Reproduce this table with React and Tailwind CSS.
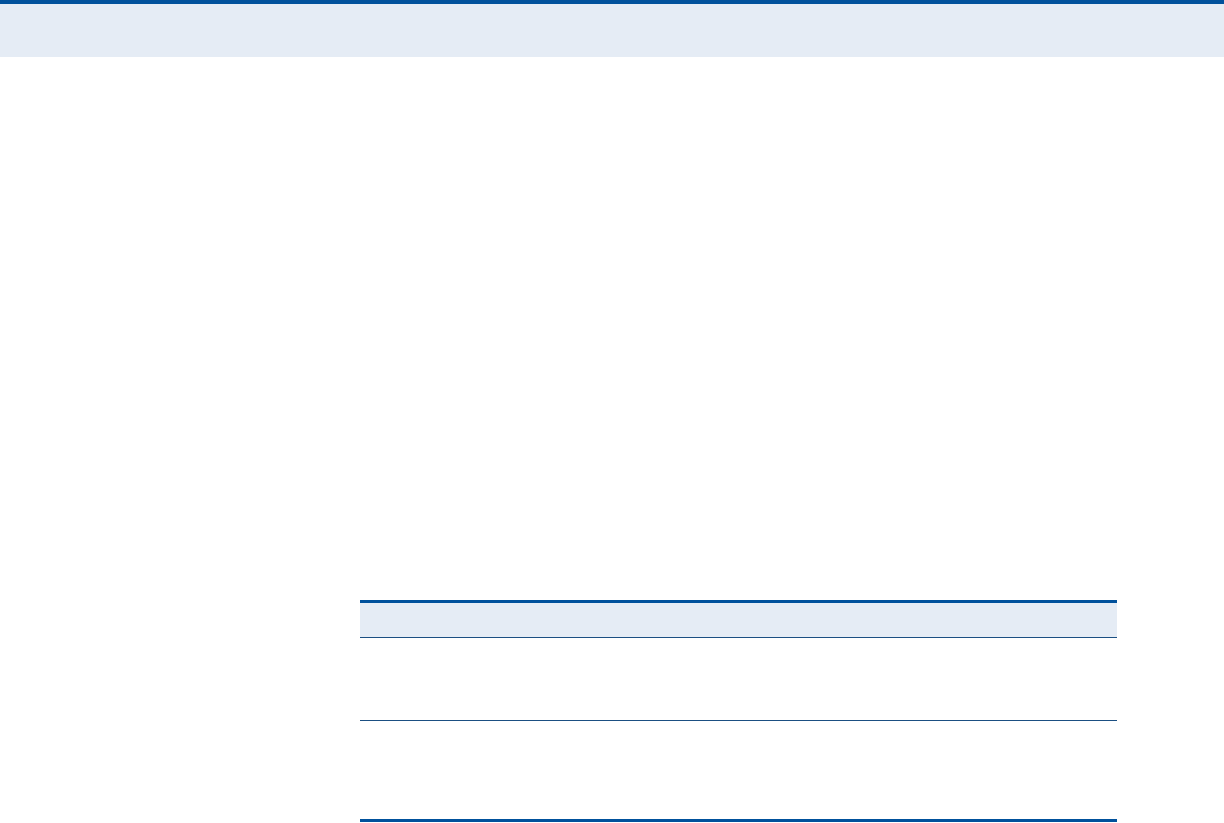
export default function App() {
    const rows = [0, 1];
    return (
        <div className="w-[1224px] h-[823px] bg-white overflow-hidden font-['Liberation_Sans',sans-serif]">
            <div className="h-[4px] bg-[#00519c]" />
            <div className="h-[53px] bg-[#e5ecf5]" />

            <div className="pt-[543px] pl-[360px]">
                <div className="w-[757px]">
                    <div className="h-[3px] bg-[#00519c]" />
                    <div className="h-[35px] bg-[#e5ecf5] border-b border-[#1b4f82]" />
                    {rows.map(r => (
                        <div key={r} className={`${r === 0 ? 'h-[83px] border-b border-[#1b4f82]' : 'h-[98px]'}`} />
                    ))}
                    <div className="h-[3px] bg-[#00519c]" />
                </div>
            </div>
        </div>
    );
}
